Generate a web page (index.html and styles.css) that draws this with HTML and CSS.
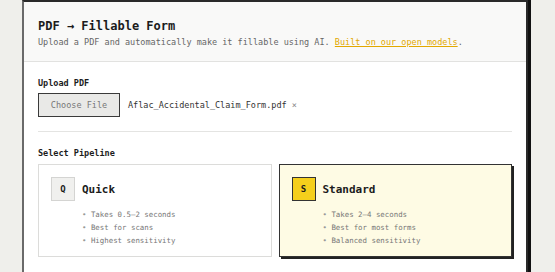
FILE: index.html
```html
<!DOCTYPE html>
<html lang="en">
<head>
    <meta charset="UTF-8">
    <meta name="viewport" content="width=device-width, initial-scale=1.0">
    <title>PDF to Fillable Form</title>
    <link rel="stylesheet" href="styles.css">
</head>
<body>
    <div class="panel">
        <div class="panel-header">
            <h1 class="title">PDF &rarr; Fillable Form</h1>
            <p class="subtitle">Upload a PDF and automatically make it fillable using AI. <a href="#">Built on our open models</a>.</p>
        </div>

        <div class="panel-body">
            <div class="section upload">
                <div class="label">Upload PDF</div>
                <div class="file-row">
                    <button class="file-btn">Choose File</button>
                    <span class="file-name">Aflac_Accidental_Claim_Form.pdf <span class="remove">&times;</span></span>
                </div>
            </div>

            <div class="section">
                <div class="label">Select Pipeline</div>
                <div class="pipelines">
                    <div class="pipe">
                        <div class="pipe-head">
                            <span class="badge">Q</span>
                            <span class="pipe-name">Quick</span>
                        </div>
                        <ul class="pipe-list">
                            <li>Takes 0.5&ndash;2 seconds</li>
                            <li>Best for scans</li>
                            <li>Highest sensitivity</li>
                        </ul>
                    </div>
                    <div class="pipe selected">
                        <div class="pipe-head">
                            <span class="badge">S</span>
                            <span class="pipe-name">Standard</span>
                        </div>
                        <ul class="pipe-list">
                            <li>Takes 2&ndash;4 seconds</li>
                            <li>Best for most forms</li>
                            <li>Balanced sensitivity</li>
                        </ul>
                    </div>
                </div>
            </div>
        </div>
    </div>
</body>
</html>
```

FILE: styles.css
```css
body {
    margin: 0;
    background-color: #efefeb;
    font-family: "DejaVu Sans Mono", "Liberation Mono", monospace;
    color: #1c1c1c;
}

.panel {
    width: 506px;
    height: 100vh;
    box-sizing: border-box;
    margin-left: 22px;
    background: white;
    border: 2px solid #2a2a2a;
    border-left-color: #6a6a6a;
    border-bottom: none;
    box-shadow: 3px 0 0 #111;
}

.panel-header {
    background: #f9f9f8;
    border-bottom: 1px solid #e2e2e0;
    padding: 16px 14px 13px;
}

.title {
    margin: 0;
    font-size: 12px;
    font-weight: bold;
    line-height: 16px;
}

.subtitle {
    margin: 2px 0 0;
    font-size: 8.5px;
    line-height: 12px;
    color: #666;
}

.subtitle a {
    color: #e2a800;
    text-decoration: underline;
}

.panel-body {
    padding: 0 14px;
}

.section {
    padding-top: 15px;
}

.upload {
    padding-bottom: 14px;
    border-bottom: 1px solid #e4e4e2;
}

.label {
    font-size: 8.5px;
    font-weight: bold;
    line-height: 12px;
}

.file-row {
    display: flex;
    align-items: center;
    gap: 8px;
    margin-top: 4px;
}

.file-btn {
    width: 82px;
    height: 24px;
    font-family: inherit;
    font-size: 8.5px;
    color: #777;
    background: #e9e9e7;
    border: 1px solid #3a3a3a;
    border-radius: 0;
    padding: 0;
}

.file-name {
    font-size: 8.5px;
    color: #333;
}

.remove {
    color: #888;
}

.pipelines {
    display: flex;
    gap: 7px;
    margin-top: 5px;
}

.pipe {
    flex: 1;
    height: 93px;
    box-sizing: border-box;
    border: 1px solid #dcdcda;
    padding: 12px;
}

.pipe.selected {
    background: #fefbe4;
    border: 1.5px solid #333;
    box-shadow: 2px 2px 0 #222;
}

.pipe-head {
    display: flex;
    align-items: center;
    gap: 7px;
}

.badge {
    width: 24px;
    height: 24px;
    box-sizing: border-box;
    display: flex;
    align-items: center;
    justify-content: center;
    font-size: 9px;
    font-weight: bold;
    background: #f0f0ee;
    border: 1px solid #d4d4d2;
}

.selected .badge {
    background: #f5cf1c;
    border: 1.5px solid #333;
}

.pipe-name {
    font-size: 11px;
    font-weight: bold;
}

.pipe-list {
    list-style: none;
    margin: 7px 0 0 31px;
    padding: 0;
    font-size: 7.4px;
    line-height: 13px;
    color: #777;
}

.pipe-list li::before {
    content: "\2022  ";
    white-space: pre;
    color: #999;
}
```
